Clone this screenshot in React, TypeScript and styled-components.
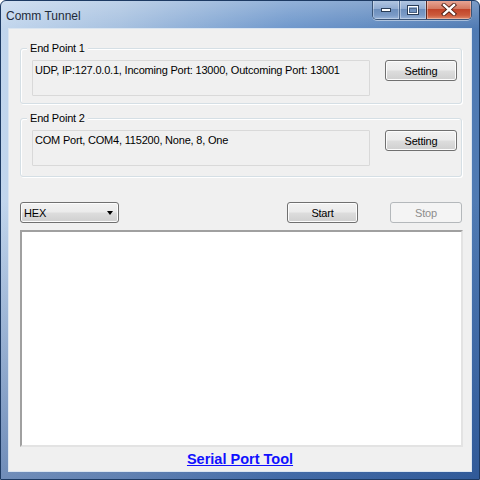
import React from "react";
import styled, { createGlobalStyle } from "styled-components";

const GlobalStyle = createGlobalStyle`
  html, body { margin: 0; padding: 0; background: #ffffff; }
  body { font-family: "Liberation Sans", Arial, sans-serif; }
  * { box-sizing: border-box; }
`;

const Window = styled.div`
  width: 480px;
  height: 480px;
  display: flex;
  flex-direction: column;
  border: 1px solid #1d3a63;
  border-radius: 6px 6px 0 0;
  background:
    linear-gradient(to bottom, rgba(255,255,255,0.25) 0px, rgba(255,255,255,0) 28px, rgba(0,0,0,0) 200px, rgba(10,50,120,0.45) 480px),
    linear-gradient(to right, #c2d6ed 0%, #a7c1e0 25%, #6f98cc 60%, #4f7ab3 100%);
  overflow: hidden;
`;

const TitleBar = styled.div`
  height: 27px;
  display: flex;
  align-items: flex-start;
  justify-content: space-between;
  padding-left: 5px;
  padding-right: 7px;
`;

const Title = styled.div`
  font-family: "Liberation Sans", Arial, sans-serif;
  font-size: 12px;
  color: #1e2a3a;
  line-height: 14px;
  padding-top: 8px;
`;

const CaptionGroup = styled.div`
  display: flex;
  height: 20px;
  margin-top: -1px;
  border: 1px solid #3a5477;
  border-top: none;
  border-radius: 0 0 5px 5px;
  overflow: hidden;
  box-shadow: 0 1px 0 rgba(255,255,255,0.45);
`;

const CaptionButton = styled.div<{ $w: number; $close?: boolean }>`
  width: ${(p) => p.$w}px;
  height: 100%;
  display: flex;
  align-items: center;
  justify-content: center;
  border-left: ${(p) => (p.$close ? "1px solid #5a2a22" : "1px solid #4a668d")};
  box-shadow: inset 0 0 0 1px rgba(255,255,255,0.35);
  background: ${(p) =>
    p.$close
      ? "linear-gradient(to bottom, #e9a99a 0%, #d57a62 45%, #c2452a 50%, #cc5a3c 80%, #e08a6c 100%)"
      : "linear-gradient(to bottom, #b5c9e3 0%, #91acd2 45%, #6d8fbd 50%, #7a9ac6 80%, #9ab5da 100%)"};
  &:first-child { border-left: none; }
`;

const Client = styled.div`
  flex: 1;
  margin: 0 7px 7px 7px;
  background: #f0f0f0;
  border: 1px solid #dbe5f0;
  display: flex;
  flex-direction: column;
  padding: 13px 9px 0 11px;
  font-family: "Liberation Sans", Arial, sans-serif;
  font-size: 11px;
  letter-spacing: -0.2px;
  color: #000;
`;

const Group = styled.div<{ $pb: number; $mt: number }>`
  position: relative;
  margin-top: ${(p) => p.$mt}px;
  border: 1px solid #d5dfe5;
  border-radius: 3px;
  box-shadow: inset 1px 1px 0 #ffffff, 1px 1px 0 #ffffff;
  padding: 11px 4px ${(p) => p.$pb}px 11px;
  display: flex;
  align-items: flex-start;
  gap: 15px;
`;

const Legend = styled.span`
  position: absolute;
  top: -7px;
  left: 6px;
  padding: 0 3px;
  background: #f0f0f0;
  font-size: 11px;
  line-height: 13px;
  color: #000;
`;

const InfoBox = styled.div`
  width: 339px;
  height: 36px;
  border: 1px solid #d9d9d9;
  border-radius: 1px;
  background: #f0f0f0;
  padding: 3px 2px;
  line-height: 13px;
  white-space: nowrap;
`;

const Button = styled.button<{ $w: number; $disabled?: boolean }>`
  width: ${(p) => p.$w}px;
  height: 21px;
  margin: 0;
  padding: 0;
  font-family: "Liberation Sans", Arial, sans-serif;
  font-size: 11px;
  letter-spacing: -0.2px;
  color: ${(p) => (p.$disabled ? "#8d8d8d" : "#000")};
  border: 1px solid ${(p) => (p.$disabled ? "#b4b8bb" : "#707070")};
  border-radius: 3px;
  background: ${(p) =>
    p.$disabled
      ? "#f4f4f4"
      : "linear-gradient(to bottom, #f2f2f2 0%, #ebebeb 48%, #dddddd 52%, #cfcfcf 100%)"};
  box-shadow: inset 0 0 0 1px ${(p) => (p.$disabled ? "#f4f4f4" : "#fcfcfc")};
  flex: none;
`;

const ControlRow = styled.div`
  margin-top: 25px;
  display: flex;
  align-items: center;
  height: 21px;
`;

const Combo = styled.div`
  width: 99px;
  height: 21px;
  border: 1px solid #707070;
  border-radius: 3px;
  background: linear-gradient(to bottom, #f2f2f2 0%, #ebebeb 48%, #dddddd 52%, #cfcfcf 100%);
  box-shadow: inset 0 0 0 1px #fcfcfc;
  display: flex;
  align-items: center;
  justify-content: space-between;
  padding: 0 5px 0 3px;
  font-size: 11px;
`;

const Arrow = styled.span`
  width: 0;
  height: 0;
  border-left: 3.5px solid transparent;
  border-right: 3.5px solid transparent;
  border-top: 4px solid #000;
`;

const Spacer = styled.div`
  flex: 1;
`;

const StopWrap = styled.div`
  margin-left: 32px;
  display: flex;
`;

const LogArea = styled.div`
  margin-top: 7px;
  width: 443px;
  height: 217px;
  background: #ffffff;
  border-top: 2px solid #a0a0a0;
  border-left: 2px solid #a0a0a0;
  border-right: 2px solid #e3e3e3;
  border-bottom: 2px solid #e3e3e3;
`;

const Footer = styled.div`
  flex: 1;
  display: flex;
  align-items: center;
  justify-content: center;
  padding-right: 2px;
`;

const Link = styled.a`
  font-family: "Liberation Sans", Arial, sans-serif;
  font-weight: bold;
  font-size: 14.5px;
  letter-spacing: 0;
  color: #1010ff;
  text-decoration: underline;
  cursor: pointer;
`;

export default function App() {
  return (
    <>
      <GlobalStyle />
      <Window>
        <TitleBar>
          <Title>Comm Tunnel</Title>
          <CaptionGroup>
            <CaptionButton $w={26}>
              <svg width="12" height="6" viewBox="0 0 12 6">
                <rect x="1.5" y="1.5" width="9" height="3" fill="#ffffff" stroke="#2a3d57" strokeWidth="1" />
              </svg>
            </CaptionButton>
            <CaptionButton $w={27}>
              <svg width="14" height="12" viewBox="0 0 14 12">
                <rect x="1.5" y="1.5" width="11" height="9" fill="none" stroke="#2a3d57" strokeWidth="1" />
                <rect x="2.5" y="2.5" width="9" height="7" fill="none" stroke="#ffffff" strokeWidth="1" />
                <rect x="3.5" y="4.5" width="7" height="4" fill="none" stroke="#2a3d57" strokeWidth="1" opacity="0.6" />
              </svg>
            </CaptionButton>
            <CaptionButton $w={45} $close>
              <svg width="16" height="13" viewBox="0 0 16 13">
                <path d="M3 2 L13 11 M13 2 L3 11" stroke="#4a1a10" strokeWidth="4.2" strokeLinecap="square" />
                <path d="M3 2 L13 11 M13 2 L3 11" stroke="#ffffff" strokeWidth="2.4" strokeLinecap="square" />
              </svg>
            </CaptionButton>
          </CaptionGroup>
        </TitleBar>
        <Client>
          <Group $mt={6} $pb={7}>
            <Legend>End Point 1</Legend>
            <InfoBox>UDP, IP:127.0.0.1, Incoming Port: 13000, Outcoming Port: 13001</InfoBox>
            <Button $w={72}>Setting</Button>
          </Group>
          <Group $mt={14} $pb={10}>
            <Legend>End Point 2</Legend>
            <InfoBox>COM Port, COM4, 115200, None, 8, One</InfoBox>
            <Button $w={72}>Setting</Button>
          </Group>
          <ControlRow>
            <Combo>
              HEX
              <Arrow />
            </Combo>
            <Spacer />
            <Button $w={71}>Start</Button>
            <StopWrap>
              <Button $w={72} $disabled>
                Stop
              </Button>
            </StopWrap>
          </ControlRow>
          <LogArea />
          <Footer>
            <Link>Serial Port Tool</Link>
          </Footer>
        </Client>
      </Window>
    </>
  );
}
